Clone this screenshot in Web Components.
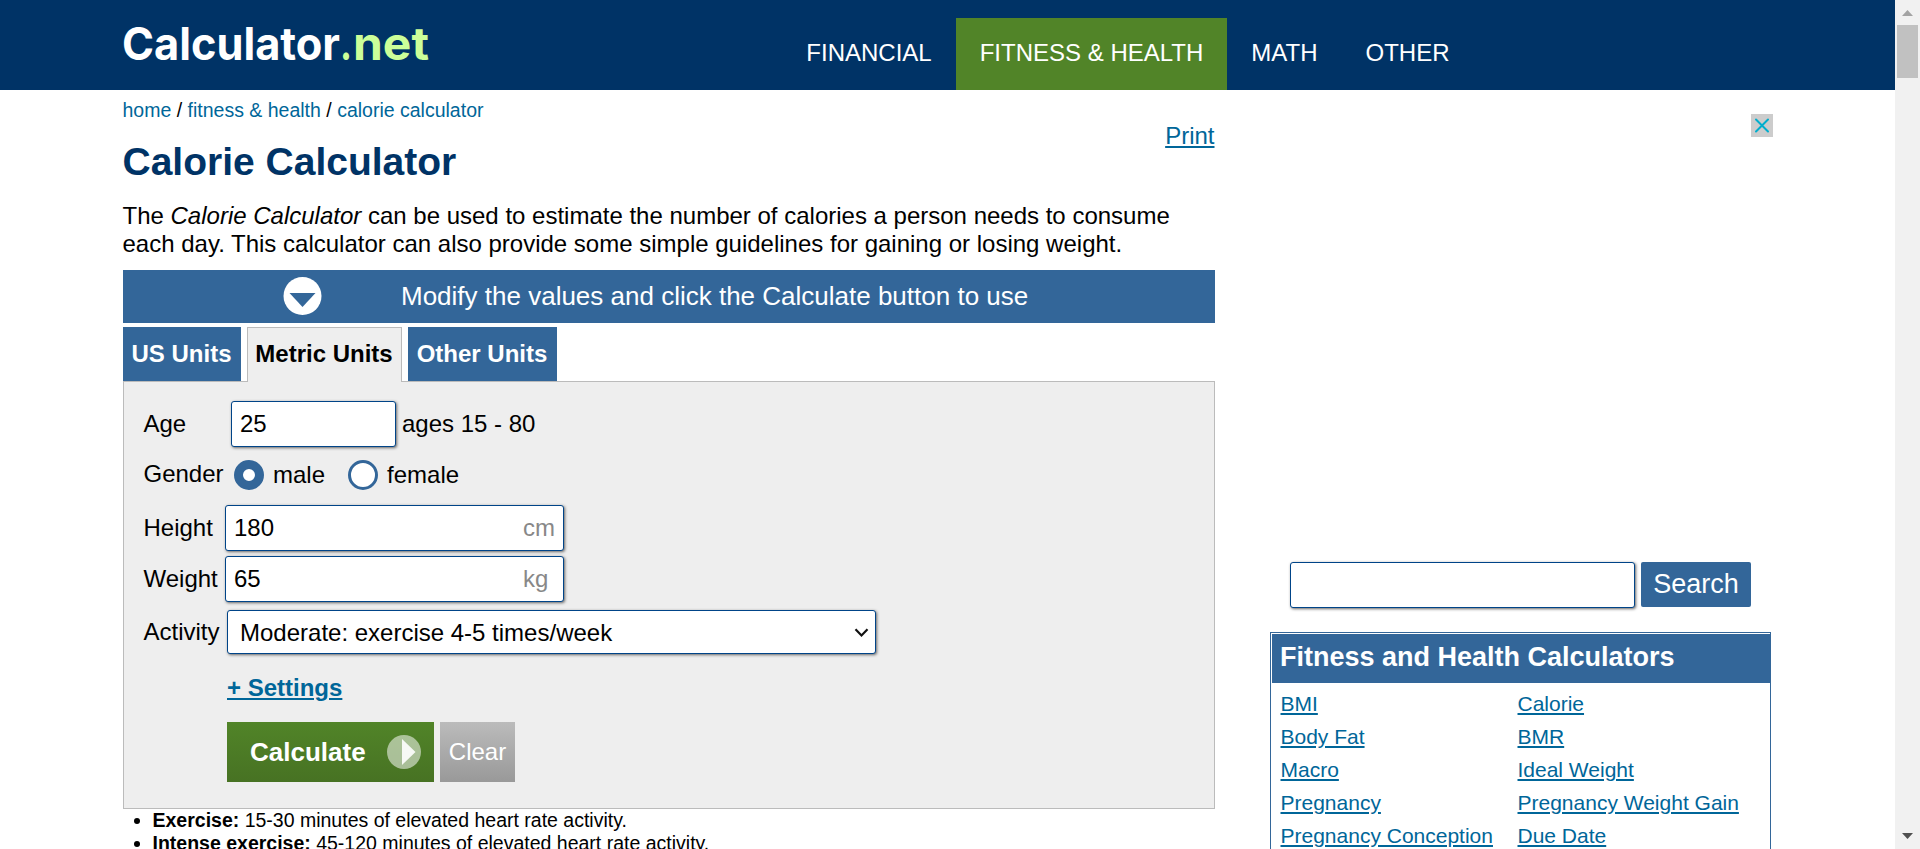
<!DOCTYPE html>
<html lang="en">
<head>
<meta charset="utf-8">
<title>Calorie Calculator</title>
<style>
html,body{margin:0;height:100%;overflow:hidden}
body{background:#fff;color:#000;font-family:"Liberation Sans",Arial,sans-serif;font-size:24px;line-height:28px}
</style>
</head>
<body>
<calorie-page></calorie-page>
<script>
const define = (name, css, html) => {
  customElements.define(name, class extends HTMLElement {
    constructor() {
      super();
      const t = document.createElement('template');
      t.innerHTML = `<style>*{box-sizing:border-box}${css}</style>${html}`;
      this.attachShadow({mode: 'open'}).appendChild(t.content.cloneNode(true));
    }
  });
};

define('nav-item', `
:host{display:flex;align-items:flex-start;height:72px;box-sizing:border-box;padding:21px 24px 0;color:#fff;line-height:28px;white-space:nowrap}
:host([active]){background:#518428}`, `<slot></slot>`);

define('site-logo', `:host{display:block;width:320px;height:60px}svg{display:block}
text{font-family:Inter,sans-serif;font-weight:700;font-size:45px}`, `
<svg width="320" height="60" viewBox="0 0 320 60">
<text x="-1" y="42" fill="#fff" textLength="218" lengthAdjust="spacingAndGlyphs">Calculator</text>
<text x="217" y="42" fill="#cf9" textLength="12" lengthAdjust="spacingAndGlyphs">.</text>
<text x="230" y="42" fill="#cf9" textLength="76" lengthAdjust="spacingAndGlyphs">net</text>
</svg>`);

define('site-header', `
:host{display:flex;justify-content:space-between;box-sizing:border-box;height:90px;background:#036;padding:18px 421.5px 0 122.5px}
nav{display:flex}`, `
<site-logo></site-logo>
<nav><nav-item>FINANCIAL</nav-item><nav-item active>FITNESS &amp; HEALTH</nav-item><nav-item>MATH</nav-item><nav-item>OTHER</nav-item></nav>`);

define('bread-crumbs', `:host{display:block;font-size:19.5px;line-height:24px}a{color:#069}`,
`<a>home</a> / <a>fitness &amp; health</a> / <a>calorie calculator</a>`);

define('text-link', `:host{color:#069;text-decoration:underline;white-space:nowrap}`, `<slot></slot>`);

define('notice-bar', `
:host{display:flex;align-items:center;box-sizing:border-box;height:53px;background:#369;color:#fff;font-size:26px;padding:0 0 1px 160px;gap:78.500px;white-space:nowrap}
svg{flex:none}`, `
<svg width="40" height="40" viewBox="0 0 40 40"><circle cx="19.5" cy="20" r="19" fill="#fff"/><path d="M6.500 17h26L19.500 31z" fill="#369"/></svg><slot></slot>`);

define('unit-tab', `
:host{display:flex;align-items:center;justify-content:center;box-sizing:border-box;height:54px;background:#369;color:#fff;font-weight:700;white-space:nowrap;width:var(--w)}
:host([active]){background:#eee;color:#000;border:1px solid #bbb;border-bottom:0;height:55px;margin-bottom:-1px;padding-bottom:2px;z-index:1}`, `<slot></slot>`);

define('text-field', `
:host{display:flex;align-items:center;justify-content:space-between;flex:none;box-sizing:border-box;background:#fff;border:1px solid #048;border-radius:3px;box-shadow:1px 1px 3px #666;width:var(--w);height:var(--h,46px);padding:0 8px;white-space:nowrap}
::slotted([slot=unit]){color:#888;width:32px}`, `<slot></slot><slot name="unit"></slot>`);

define('select-field', `
:host{display:flex;align-items:center;justify-content:space-between;flex:none;box-sizing:border-box;background:#fff;border:1px solid #048;border-radius:3px;box-shadow:1px 1px 3px #666;width:649px;height:44px;padding:1px 6px 0 12px;white-space:nowrap}`, `
<slot></slot><svg width="15" height="10" viewBox="0 0 15 10"><path d="M1.5 1.2 7.5 7.4 13.5 1.2" fill="none" stroke="#111" stroke-width="2.2"/></svg>`);

define('radio-option', `
:host{display:flex;align-items:center;gap:9px}
i{width:30px;height:30px;border-radius:50%;background:#fff;border:3px solid #369}
:host([checked]) i{border-width:9px}`, `<i></i><slot></slot>`);

define('field-row', `
:host{display:flex;align-items:center;white-space:nowrap}
label{width:var(--l);margin-left:-.5px;padding-right:.5px;flex:none;box-sizing:content-box}`, `<label><slot name="label"></slot></label><slot></slot>`);

define('calc-button', `
:host{display:flex;align-items:center;justify-content:space-between;box-sizing:border-box;width:207px;height:60px;padding:0 12px 0 23px;background:linear-gradient(#518428,#477223);color:#fff;font-weight:700;font-size:26px}`, `
<slot></slot><svg width="36" height="36" viewBox="0 0 36 36"><circle cx="18" cy="18" r="17" fill="#fff" fill-opacity=".53"/><path d="M16 5v26l13.500-13z" fill="#fff" fill-opacity=".9"/></svg>`);

define('clear-button', `
:host{display:flex;align-items:center;justify-content:center;width:75px;height:60px;background:linear-gradient(#bbb,#999);color:#fff}`, `<slot></slot>`);

define('calc-form', `
:host{display:block;box-sizing:border-box;height:428px;background:#eee;border:1px solid #bbb;padding:19px 0 0 20.5px}
.r2{margin-top:13px;--l:90px}.r3{margin-top:15px;--l:81px}.r4{margin-top:5px;--l:81px}.r5{margin-top:8px;--l:83px}
.r2 span{padding-bottom:2px;display:block}
.ages{margin-left:6px}radio-option+radio-option{margin-left:23px}
.set{display:block;margin:19px 0 0 83px;font-weight:700;line-height:30px}
.btns{display:flex;gap:6px;margin:19px 0 0 83px}`, `
<field-row style="--l:87px"><span slot="label">Age</span><text-field style="--w:165px">25</text-field><span class="ages">ages 15 - 80</span></field-row>
<field-row class="r2"><span slot="label">Gender</span><radio-option checked>male</radio-option><radio-option>female</radio-option></field-row>
<field-row class="r3"><span slot="label">Height</span><text-field style="--w:339px">180<span slot="unit">cm</span></text-field></field-row>
<field-row class="r4"><span slot="label">Weight</span><text-field style="--w:339px">65<span slot="unit">kg</span></text-field></field-row>
<field-row class="r5"><span slot="label">Activity</span><select-field>Moderate: exercise 4-5 times/week</select-field></field-row>
<text-link class="set">+ Settings</text-link>
<div class="btns"><calc-button>Calculate</calc-button><clear-button>Clear</clear-button></div>`);

define('calc-main', `
:host{display:block;width:1092px}
.head{display:flex;justify-content:space-between}
bread-crumbs{margin-top:8px}
h1{margin:17px 0 0;font-size:39px;line-height:46px;color:#036;font-weight:700}
.print{margin-top:32px}
p{margin:15px 0 0;line-height:28px;white-space:nowrap;height:70px;padding-top:2px}
.tabs{display:flex;gap:6px;margin-top:4px;position:relative}
ul{margin:0;padding:0 0 0 30px;font-size:19.5px;line-height:23px}`, `
<div class="head"><div><bread-crumbs></bread-crumbs><h1>Calorie Calculator</h1></div><text-link class="print">Print</text-link></div>
<p>The <i>Calorie Calculator</i> can be used to estimate the number of calories a person needs to consume<br>each day. This calculator can also provide some simple guidelines for gaining or losing weight.</p>
<notice-bar>Modify the values and click the Calculate button to use</notice-bar>
<div class="tabs"><unit-tab style="--w:118px">US Units</unit-tab><unit-tab active style="--w:155px">Metric Units</unit-tab><unit-tab style="--w:149px">Other Units</unit-tab></div>
<calc-form></calc-form>
<ul><li><b>Exercise:</b> 15-30 minutes of elevated heart rate activity.</li><li><b>Intense exercise:</b> 45-120 minutes of elevated heart rate activity.</li></ul>`);

define('related-box', `
:host{display:block;height:240px;border:1px solid #369;padding:1px 0 0 1px}
h2{margin:0;height:49px;background:#369;color:#fff;font-size:27px;line-height:47px;padding-left:8px}
.g{display:grid;grid-template-columns:237px 1fr;padding:4px 0 0 8.500px;font-size:21px;line-height:33px}`, `
<h2>Fitness and Health Calculators</h2>
<div class="g"><text-link>BMI</text-link><text-link>Calorie</text-link><text-link>Body Fat</text-link><text-link>BMR</text-link><text-link>Macro</text-link><text-link>Ideal Weight</text-link><text-link>Pregnancy</text-link><text-link>Pregnancy Weight Gain</text-link><text-link>Pregnancy Conception</text-link><text-link>Due Date</text-link></div>`);

define('side-column', `
:host{display:flex;flex-direction:column;width:501px;padding-top:24px}
.x{align-self:flex-end;margin-right:-2px;width:22px;height:23px;background:#ccc}
.x svg{display:block}
.search{display:flex;gap:6px;margin:425px 0 24px 20px}
button{width:110px;height:45px;border:0;border-radius:2px;background:#369;color:#fff;font:27px "Liberation Sans",sans-serif;padding:0}`, `
<div class="x"><svg width="22" height="23" viewBox="0 0 22 23"><path d="M5 5.500 17 17.500M17 5.500 5 17.500" stroke="#00aecd" stroke-width="2" stroke-linecap="round"/></svg></div>
<div class="search"><text-field style="--w:345px"></text-field><button>Search</button></div>
<related-box></related-box>`);

define('scroll-bar', `
:host{display:flex;flex-direction:column;align-items:center;width:25px;height:849px;background:#f1f1f1}
.t{width:21px;height:53px;background:#c1c1c1}
svg{display:block}.d{margin-top:auto}`, `
<svg width="25" height="25"><path d="M7 16h11L12.500 10z" fill="#a3a3a3"/></svg><div class="t"></div><svg class="d" width="25" height="25"><path d="M7 9h11L12.500 15z" fill="#505050"/></svg>`);

define('calorie-page', `
:host{display:grid;grid-template-columns:1fr 25px;height:849px;overflow:hidden}
.body{display:flex;gap:55.500px;padding-left:122.500px}`, `
<div><site-header></site-header><div class="body"><calc-main></calc-main><side-column></side-column></div></div>
<scroll-bar></scroll-bar>`);
</script>
</body>
</html>
